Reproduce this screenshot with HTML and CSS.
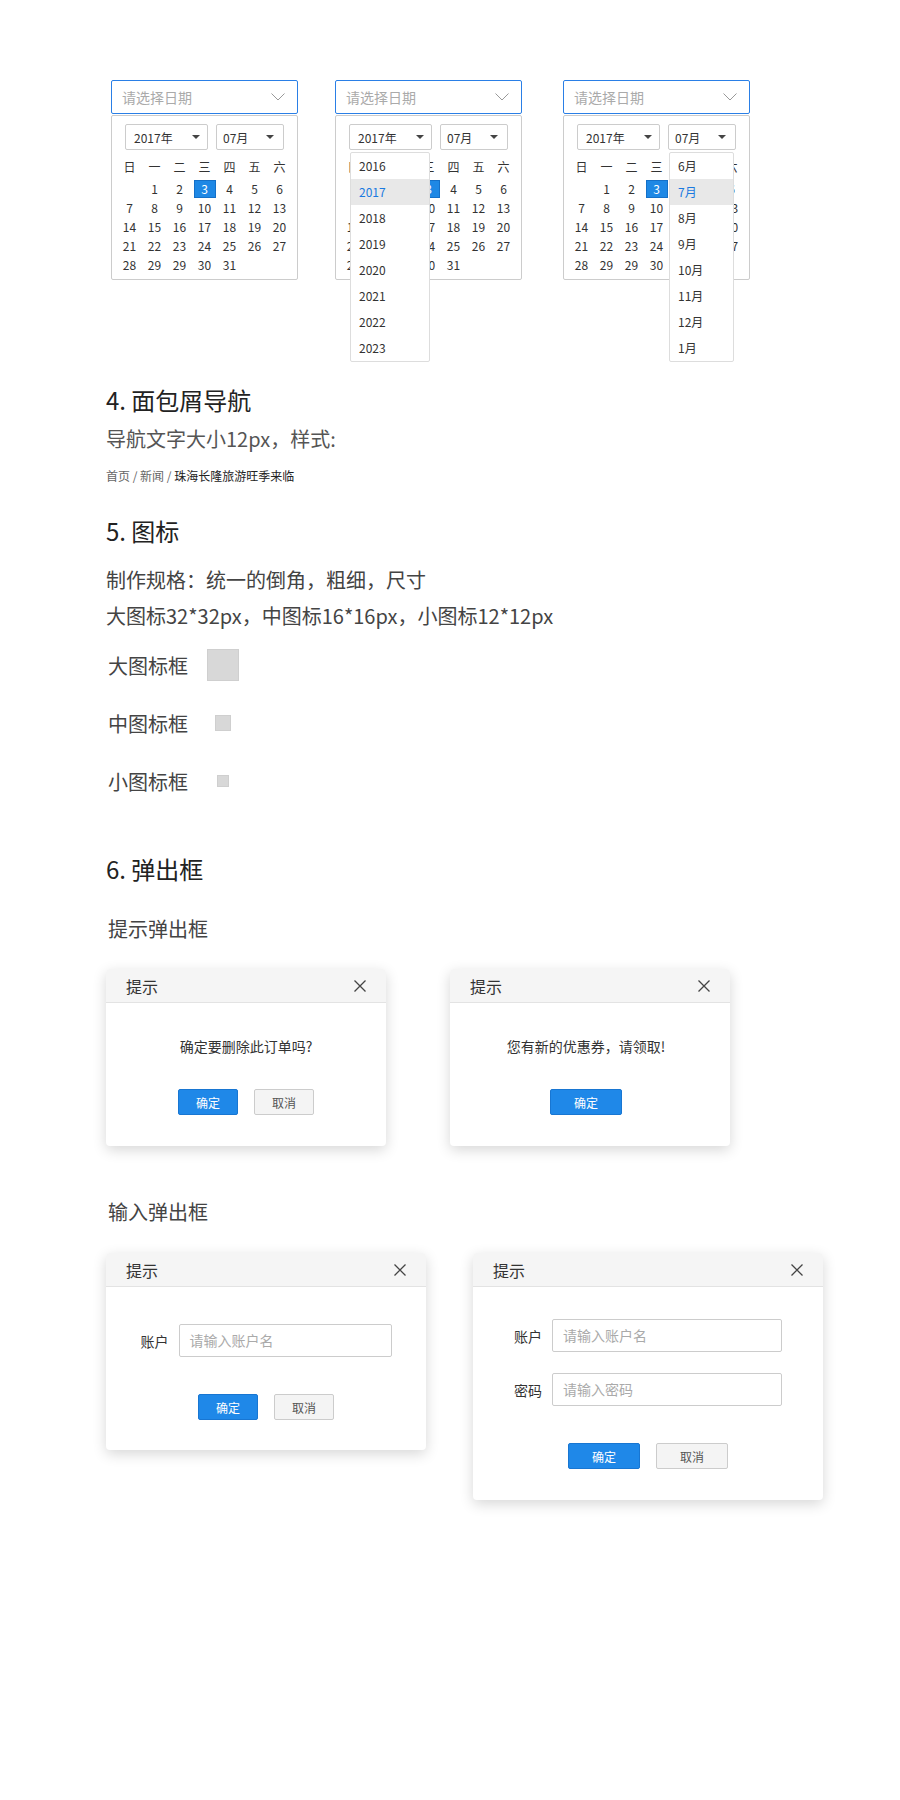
FILE: index.html
```html
<!DOCTYPE html>
<html lang="zh-CN">
<head>
    <meta charset="UTF-8">
    <title>组件规范</title>
    <link rel="stylesheet" href="styles.css">
</head>
<body>
<div class="page">

    <!-- 日期选择 -->
    <div class="pickers">
        <div class="picker">
            <div class="date-input">
                <span>请选择日期</span>
                <svg class="chevron" width="14" height="8" viewBox="0 0 14 8"><path d="M0.5 0.5 L7 7 L13.5 0.5" fill="none" stroke="#999" stroke-width="1"/></svg>
            </div>
            <div class="cal">
                <div class="cal-head">
                    <div class="sel sel-year">2017年<i class="caret"></i></div>
                    <div class="sel sel-month">07月<i class="caret"></i></div>
                </div>
                <div class="cal-grid">
                    <span>日</span><span>一</span><span>二</span><span>三</span><span>四</span><span>五</span><span>六</span>
                    <span></span><span>1</span><span>2</span><span><b class="on">3</b></span><span>4</span><span>5</span><span>6</span>
                    <span>7</span><span>8</span><span>9</span><span>10</span><span>11</span><span>12</span><span>13</span>
                    <span>14</span><span>15</span><span>16</span><span>17</span><span>18</span><span>19</span><span>20</span>
                    <span>21</span><span>22</span><span>23</span><span>24</span><span>25</span><span>26</span><span>27</span>
                    <span>28</span><span>29</span><span>29</span><span>30</span><span>31</span>
                </div>
            </div>
        </div>

        <div class="picker">
            <div class="date-input">
                <span>请选择日期</span>
                <svg class="chevron" width="14" height="8" viewBox="0 0 14 8"><path d="M0.5 0.5 L7 7 L13.5 0.5" fill="none" stroke="#999" stroke-width="1"/></svg>
            </div>
            <div class="cal">
                <div class="cal-head">
                    <div class="sel sel-year">2017年<i class="caret"></i>
                        <ul class="menu">
                            <li>2016</li>
                            <li class="cur">2017</li>
                            <li>2018</li>
                            <li>2019</li>
                            <li>2020</li>
                            <li>2021</li>
                            <li>2022</li>
                            <li>2023</li>
                        </ul>
                    </div>
                    <div class="sel sel-month">07月<i class="caret"></i></div>
                </div>
                <div class="cal-grid">
                    <span>日</span><span>一</span><span>二</span><span>三</span><span>四</span><span>五</span><span>六</span>
                    <span></span><span>1</span><span>2</span><span><b class="on">3</b></span><span>4</span><span>5</span><span>6</span>
                    <span>7</span><span>8</span><span>9</span><span>10</span><span>11</span><span>12</span><span>13</span>
                    <span>14</span><span>15</span><span>16</span><span>17</span><span>18</span><span>19</span><span>20</span>
                    <span>21</span><span>22</span><span>23</span><span>24</span><span>25</span><span>26</span><span>27</span>
                    <span>28</span><span>29</span><span>29</span><span>30</span><span>31</span>
                </div>
            </div>
        </div>

        <div class="picker">
            <div class="date-input">
                <span>请选择日期</span>
                <svg class="chevron" width="14" height="8" viewBox="0 0 14 8"><path d="M0.5 0.5 L7 7 L13.5 0.5" fill="none" stroke="#999" stroke-width="1"/></svg>
            </div>
            <div class="cal">
                <div class="cal-head">
                    <div class="sel sel-year">2017年<i class="caret"></i></div>
                    <div class="sel sel-month">07月<i class="caret"></i>
                        <ul class="menu">
                            <li>6月</li>
                            <li class="cur">7月</li>
                            <li>8月</li>
                            <li>9月</li>
                            <li>10月</li>
                            <li>11月</li>
                            <li>12月</li>
                            <li>1月</li>
                        </ul>
                    </div>
                </div>
                <div class="cal-grid">
                    <span>日</span><span>一</span><span>二</span><span>三</span><span>四</span><span>五</span><span>六</span>
                    <span></span><span>1</span><span>2</span><span><b class="on">3</b></span><span>4</span><span>5</span><span>6</span>
                    <span>7</span><span>8</span><span>9</span><span>10</span><span>11</span><span>12</span><span>13</span>
                    <span>14</span><span>15</span><span>16</span><span>17</span><span>18</span><span>19</span><span>20</span>
                    <span>21</span><span>22</span><span>23</span><span>24</span><span>25</span><span>26</span><span>27</span>
                    <span>28</span><span>29</span><span>29</span><span>30</span><span>31</span>
                </div>
            </div>
        </div>
    </div>

    <!-- 4. 面包屑导航 -->
    <h2 class="title title-crumb">4. 面包屑导航</h2>
    <p class="text text-crumb">导航文字大小12px，样式:</p>
    <div class="crumb">首页 / 新闻 / <span>珠海长隆旅游旺季来临</span></div>

    <!-- 5. 图标 -->
    <h2 class="title title-icon">5. 图标</h2>
    <p class="text text-icon">制作规格：统一的倒角，粗细，尺寸<br>大图标32*32px，中图标16*16px，小图标12*12px</p>
    <div class="icon-row first">
        <span class="icon-label">大图标框</span>
        <span class="icon-cell"><i class="icon-box big"></i></span>
    </div>
    <div class="icon-row">
        <span class="icon-label">中图标框</span>
        <span class="icon-cell"><i class="icon-box mid"></i></span>
    </div>
    <div class="icon-row">
        <span class="icon-label">小图标框</span>
        <span class="icon-cell"><i class="icon-box small"></i></span>
    </div>

    <!-- 6. 弹出框 -->
    <h2 class="title title-dialog">6. 弹出框</h2>
    <p class="text sub">提示弹出框</p>
    <div class="dialogs">
        <div class="dialog w280">
            <div class="dialog-head">
                <span>提示</span>
                <svg class="close" width="12" height="12" viewBox="0 0 12 12"><path d="M0.5 0.5 L11.5 11.5 M11.5 0.5 L0.5 11.5" stroke="#444" stroke-width="1.3"/></svg>
            </div>
            <div class="dialog-body tip">
                <p class="msg">确定要删除此订单吗?</p>
                <div class="btns">
                    <button class="btn btn-ok">确定</button>
                    <button class="btn btn-cancel">取消</button>
                </div>
            </div>
        </div>
        <div class="dialog w280">
            <div class="dialog-head">
                <span>提示</span>
                <svg class="close" width="12" height="12" viewBox="0 0 12 12"><path d="M0.5 0.5 L11.5 11.5 M11.5 0.5 L0.5 11.5" stroke="#444" stroke-width="1.3"/></svg>
            </div>
            <div class="dialog-body tip shift">
                <p class="msg">您有新的优惠券，请领取!</p>
                <div class="btns">
                    <button class="btn btn-ok wide">确定</button>
                </div>
            </div>
        </div>
    </div>

    <p class="text sub sub-input">输入弹出框</p>
    <div class="dialogs dialogs-input">
        <div class="dialog w320">
            <div class="dialog-head">
                <span>提示</span>
                <svg class="close" width="12" height="12" viewBox="0 0 12 12"><path d="M0.5 0.5 L11.5 11.5 M11.5 0.5 L0.5 11.5" stroke="#444" stroke-width="1.3"/></svg>
            </div>
            <div class="dialog-body form-one">
                <div class="field">
                    <label>账户</label>
                    <div class="input w213">请输入账户名</div>
                </div>
                <div class="btns">
                    <button class="btn btn-ok">确定</button>
                    <button class="btn btn-cancel">取消</button>
                </div>
            </div>
        </div>
        <div class="dialog w350">
            <div class="dialog-head">
                <span>提示</span>
                <svg class="close" width="12" height="12" viewBox="0 0 12 12"><path d="M0.5 0.5 L11.5 11.5 M11.5 0.5 L0.5 11.5" stroke="#444" stroke-width="1.3"/></svg>
            </div>
            <div class="dialog-body form-two">
                <div class="field">
                    <label>账户</label>
                    <div class="input w230">请输入账户名</div>
                </div>
                <div class="field">
                    <label>密码</label>
                    <div class="input w230">请输入密码</div>
                </div>
                <div class="btns">
                    <button class="btn btn-ok wide">确定</button>
                    <button class="btn btn-cancel wide">取消</button>
                </div>
            </div>
        </div>
    </div>

</div>
</body>
</html>
```

FILE: styles.css
```css
  body {
      margin: 0;
      padding: 0;
      background-color: #fff;
      color: #333;
      font-family: "Noto Sans CJK SC", "Noto Sans", sans-serif;
  }
  .page {
      padding: 80px 0 200px 106px;
  }

  /* 日期选择 */
  .pickers {
      display: flex;
      gap: 37px;
      margin-left: 5px;
  }
  .picker {
      width: 187px;
  }
  .picker:last-child {
      margin-left: 4px;
  }
  .date-input {
      box-sizing: border-box;
      height: 34px;
      border: 1px solid #2a7fe6;
      border-radius: 2px;
      display: flex;
      align-items: center;
      justify-content: space-between;
      padding: 0 12px 0 10px;
      font-size: 14px;
      color: #aaa;
  }
  .cal {
      margin-top: 1px;
      border: 1px solid #ccc;
      border-radius: 2px;
      padding: 8px 0 5px 0;
  }
  .cal-head {
      display: flex;
      gap: 8px;
      padding-left: 13px;
  }
  .sel {
      position: relative;
      box-sizing: border-box;
      height: 26px;
      border: 1px solid #ccc;
      border-radius: 2px;
      display: flex;
      align-items: center;
      justify-content: space-between;
      font-size: 12px;
      color: #333;
  }
  .sel-year {
      width: 83px;
      padding: 0 7px 0 8px;
  }
  .sel-month {
      width: 68px;
      padding: 0 9px 0 6px;
  }
  .caret {
      width: 0;
      height: 0;
      border-left: 4px solid transparent;
      border-right: 4px solid transparent;
      border-top: 4px solid #444;
  }
  .menu {
      position: absolute;
      top: 27px;
      left: 0;
      right: 1px;
      margin: 0;
      padding: 0;
      list-style: none;
      background-color: #fff;
      border: 1px solid #ddd;
      border-radius: 2px;
      z-index: 10;
  }
  .menu li {
      height: 26px;
      line-height: 26px;
      padding-left: 8px;
      font-size: 12px;
      color: #333;
  }
  .menu li.cur {
      background-color: #e8e8e8;
      color: #1a7ae0;
  }
  .cal-grid {
      display: grid;
      grid-template-columns: repeat(7, 25px);
      grid-template-rows: 26px repeat(5, 19px);
      margin: 3px 0 0 5px;
      font-size: 12px;
      color: #333;
  }
  .cal-grid span {
      display: flex;
      align-items: center;
      justify-content: center;
  }
  .cal-grid .on {
      box-sizing: border-box;
      width: 22px;
      height: 18px;
      display: flex;
      align-items: center;
      justify-content: center;
      background-color: #1e88e5;
      border: 1px solid #1470c8;
      color: #fff;
      font-weight: normal;
  }

  /* 标题和文字 */
  .title {
      margin: 0;
      font-size: 24px;
      line-height: 30px;
      font-weight: 400;
      color: #222;
  }
  .title-crumb {
      margin-top: 105px;
  }
  .title-icon {
      margin-top: 31px;
  }
  .title-dialog {
      margin-top: 57px;
  }
  .text {
      margin: 0;
      font-size: 20px;
      line-height: 28px;
      color: #444;
  }
  .text-crumb {
      margin-top: 10px;
      color: #555;
  }
  .text-icon {
      margin-top: 16px;
      line-height: 36px;
  }
  .crumb {
      margin-top: 14px;
      font-size: 12px;
      line-height: 18px;
      color: #666;
  }
  .crumb span {
      color: #222;
  }

  /* 图标框 */
  .icon-row {
      display: flex;
      align-items: center;
      height: 32px;
      margin-top: 26px;
  }
  .icon-row.first {
      margin-top: 15px;
  }
  .icon-label {
      box-sizing: border-box;
      width: 101px;
      padding-left: 2px;
      white-space: nowrap;
      font-size: 20px;
      color: #444;
  }
  .icon-cell {
      width: 32px;
      height: 32px;
      display: flex;
      align-items: center;
      justify-content: center;
  }
  .icon-box {
      box-sizing: border-box;
      background-color: #d8d8d8;
      border: 1px solid #cfcfcf;
  }
  .icon-box.big {
      width: 32px;
      height: 32px;
  }
  .icon-box.mid {
      width: 16px;
      height: 16px;
  }
  .icon-box.small {
      width: 12px;
      height: 12px;
  }

  /* 弹出框 */
  .sub {
      margin-top: 31px;
      padding-left: 2px;
  }
  .sub-input {
      margin-top: 52px;
  }
  .dialogs {
      display: flex;
      align-items: flex-start;
      gap: 64px;
      margin-top: 26px;
  }
  .dialogs-input {
      gap: 47px;
      margin-top: 27px;
  }
  .dialog {
      background-color: #fff;
      border-radius: 4px;
      box-shadow: 0 4px 14px rgba(0, 0, 0, 0.16);
      overflow: hidden;
  }
  .w280 {
      width: 280px;
  }
  .w320 {
      width: 320px;
  }
  .w350 {
      width: 350px;
  }
  .dialog-head {
      box-sizing: border-box;
      height: 34px;
      display: flex;
      align-items: center;
      justify-content: space-between;
      padding: 0 20px;
      background-color: #f5f5f5;
      border-bottom: 1px solid #e3e3e3;
      font-size: 16px;
      color: #333;
  }
  .dialog-body {
      display: flex;
      flex-direction: column;
      align-items: center;
  }
  .dialog-body.tip {
      padding: 33px 0 31px;
  }
  .dialog-body.shift {
      padding-right: 8px;
  }
  .dialog-body.form-one {
      padding: 37px 0 30px;
  }
  .dialog-body.form-two {
      padding: 32px 0 31px;
      gap: 21px;
  }
  .msg {
      margin: 0;
      font-size: 14px;
      line-height: 20px;
      color: #333;
  }
  .btns {
      display: flex;
      justify-content: center;
      gap: 16px;
      margin-top: 33px;
  }
  .form-one .btns {
      margin-top: 37px;
  }
  .form-two .btns {
      margin-top: 16px;
  }
  .btn {
      box-sizing: border-box;
      width: 60px;
      height: 26px;
      padding: 0;
      border-radius: 2px;
      font-family: inherit;
      font-size: 12px;
      cursor: pointer;
  }
  .btn.wide {
      width: 72px;
  }
  .btn-ok {
      background-color: #1f88e8;
      border: 1px solid #1876d2;
      color: #fff;
  }
  .btn-cancel {
      background-color: #f4f4f4;
      border: 1px solid #ccc;
      color: #555;
  }
  .field {
      display: flex;
      align-items: center;
      gap: 10px;
  }
  .field label {
      font-size: 14px;
      color: #333;
  }
  .input {
      box-sizing: border-box;
      height: 33px;
      line-height: 31px;
      padding-left: 10px;
      border: 1px solid #ccc;
      border-radius: 2px;
      font-size: 14px;
      color: #aaa;
  }
  .w213 {
      width: 213px;
  }
  .w230 {
      width: 230px;
  }
```
